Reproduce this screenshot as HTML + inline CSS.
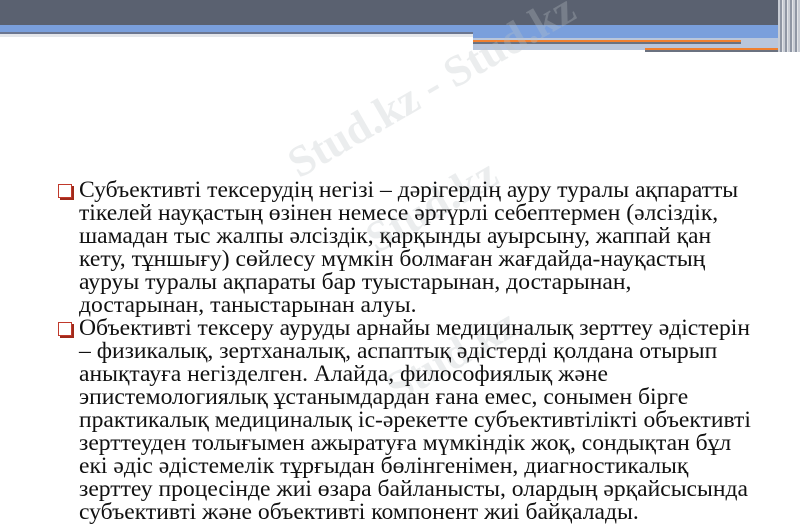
<!DOCTYPE html>
<html><head><meta charset="utf-8"><style>
html,body{margin:0;padding:0}
body{width:800px;height:524px;position:relative;overflow:hidden;background:#fff;font-family:"Liberation Serif",serif}
.a{position:absolute}
p{margin:0;position:absolute;left:79px;font-size:23.6px;line-height:23px;color:#111;white-space:nowrap}
.b{position:absolute;left:-21px;top:5px;width:14px;height:14px;border:1.5px solid #c0392b;background:#fff;box-shadow:2px 2px 0 #a02a1a;box-sizing:border-box}
.wm{position:absolute;font-size:44px;font-weight:bold;color:rgba(190,195,200,0.3);transform:rotate(-30deg);white-space:nowrap}
</style></head><body>
<div class="a" style="left:0;top:0;width:800px;height:25px;background:#5a6170"></div>
<div class="a" style="left:0;top:25px;width:473px;height:7px;background:#7a9fdc"></div>
<div class="a" style="left:0;top:32px;width:473px;height:2px;background:#6b7690"></div>
<div class="a" style="left:0;top:34px;width:473px;height:3px;background:#e4e6ea"></div>
<div class="a" style="left:473px;top:25px;width:305px;height:13px;background:#7a9fdc"></div>
<div class="a" style="left:473px;top:38px;width:305px;height:12px;background:#b9c6dc"></div>
<div class="a" style="left:473px;top:40px;width:268px;height:2px;background:#f08030"></div>
<div class="a" style="left:473px;top:42px;width:268px;height:1.5px;background:#6b7280"></div>
<div class="a" style="left:645px;top:48px;width:141px;height:2px;background:#f08030"></div>
<div class="a" style="left:645px;top:50px;width:141px;height:1.5px;background:#6b7280"></div>
<div class="a" style="left:778px;top:0;width:22px;height:52px;background:repeating-linear-gradient(90deg,#c8ccd4 0 2px,#8f96a4 2px 4px,#e2e4e8 4px 5px)"></div>
<div class="wm" style="left:270px;top:60px">Stud.kz - Stud.kz</div>
<div class="wm" style="left:360px;top:180px">Stud.kz</div>
<div class="wm" style="left:380px;top:330px">Stud.kz</div>
<p style="top:179px"><span class="b"></span>Субъективті тексерудің негізі – дәрігердің ауру туралы ақпаратты<br>тікелей науқастың өзінен немесе әртүрлі себептермен (әлсіздік,<br>шамадан тыс жалпы әлсіздік, қарқынды ауырсыну, жаппай қан<br>кету, тұншығу) сөйлесу мүмкін болмаған жағдайда-науқастың<br>ауруы туралы ақпараты бар туыстарынан, достарынан,<br>достарынан, таныстарынан алуы.</p>
<p style="top:317px"><span class="b"></span>Объективті тексеру ауруды арнайы медициналық зерттеу әдістерін<br>– физикалық, зертханалық, аспаптық әдістерді қолдана отырып<br>анықтауға негізделген. Алайда, философиялық және<br>эпистемологиялық ұстанымдардан ғана емес, сонымен бірге<br>практикалық медициналық іс-әрекетте субъективтілікті объективті<br>зерттеуден толығымен ажыратуға мүмкіндік жоқ, сондықтан бұл<br>екі әдіс әдістемелік тұрғыдан бөлінгенімен, диагностикалық<br>зерттеу процесінде жиі өзара байланысты, олардың әрқайсысында<br>субъективті және объективті компонент жиі байқалады.</p>
</body></html>
